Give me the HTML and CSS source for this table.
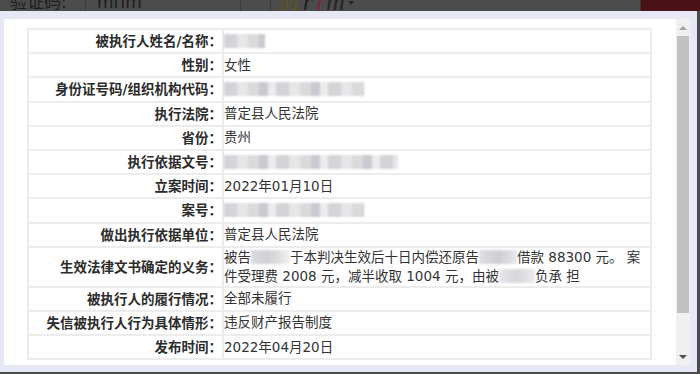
FILE: index.html
```html
<!DOCTYPE html>
<html lang="zh-CN">
<head>
<meta charset="utf-8">
<title>失信被执行人详情</title>
<link rel="stylesheet" href="styles.css">
</head>
<body>
<div class="page-strip">
  <div class="cell c-label"><span class="strip-text">验证码:</span></div>
  <div class="cell c-input"><span class="strip-text">mrim</span></div>
  <div class="cell c-gap"></div>
  <div class="cell c-captcha"><span class="cap"><span class="cap-m">M</span><span class="cap-r">r</span><span class="cap-i">i</span><span class="cap-mm">m</span></span><span class="caret"></span></div>
  <div class="cell c-side"></div>
</div>
<div class="modal">
  <div class="panel">
    <div class="content">
      <table class="info">
        <tr><th>被执行人姓名/名称<span class="colon">：</span></th><td><span class="redact w-name"></span></td></tr>
        <tr><th>性别<span class="colon">：</span></th><td>女性</td></tr>
        <tr><th>身份证号码/组织机构代码<span class="colon">：</span></th><td><span class="redact w-id"></span></td></tr>
        <tr><th>执行法院<span class="colon">：</span></th><td>普定县人民法院</td></tr>
        <tr><th>省份<span class="colon">：</span></th><td>贵州</td></tr>
        <tr><th>执行依据文号<span class="colon">：</span></th><td><span class="redact w-doc"></span></td></tr>
        <tr><th>立案时间<span class="colon">：</span></th><td>2022年01月10日</td></tr>
        <tr><th>案号<span class="colon">：</span></th><td><span class="redact w-case"></span></td></tr>
        <tr><th>做出执行依据单位<span class="colon">：</span></th><td>普定县人民法院</td></tr>
        <tr class="tall"><th>生效法律文书确定的义务<span class="colon">：</span></th><td>被告<span class="redact w-a"></span>于本判决生效后十日内偿还原告<span class="redact w-b"></span>借款 88300 元。 案件受理费 2008 元，减半收取 1004 元，由被<span class="redact w-c"></span>负承 担</td></tr>
        <tr><th>被执行人的履行情况<span class="colon">：</span></th><td>全部未履行</td></tr>
        <tr><th>失信被执行人行为具体情形<span class="colon">：</span></th><td>违反财产报告制度</td></tr>
        <tr><th>发布时间<span class="colon">：</span></th><td>2022年04月20日</td></tr>
      </table>
    </div>
    <div class="scrollbar">
      <div class="arrow arrow-up"></div>
      <div class="thumb"></div>
      <div class="track"></div>
      <div class="arrow arrow-down"></div>
    </div>
  </div>
</div>
</body>
</html>
```

FILE: styles.css
```css
html, body {
  margin: 0;
  padding: 0;
}
body {
  width: 700px;
  height: 374px;
  overflow: hidden;
  background: #4b4b4b;
  font-family: "DejaVu Sans", "Noto Sans CJK SC", sans-serif;
}

/* page behind the overlay */
.page-strip {
  display: flex;
  height: 11px;
  overflow: hidden;
}
.cell {
  height: 11px;
  box-sizing: border-box;
  border-right: 1px solid #3b3b3b;
  overflow: hidden;
}
.strip-text {
  display: block;
  margin-top: -8px;
  line-height: 20px;
  font-size: 17px;
  color: #1d1d1d;
  font-family: "DejaVu Sans", "Noto Sans CJK SC", sans-serif;
}
.c-label {
  width: 86px;
  padding-left: 10px;
}
.c-input {
  width: 155px;
  padding-left: 11px;
}
.c-gap {
  width: 30px;
}
.c-captcha {
  width: 370px;
  padding-left: 7px;
  display: flex;
  align-items: flex-start;
  justify-content: space-between;
}
.cap {
  display: block;
  margin-top: -10px;
  line-height: 24px;
  font-size: 26px;
  font-style: italic;
  font-family: "Liberation Serif", serif;
  letter-spacing: 3px;
}
.cap-m { color: #5c5424; }
.cap-r { color: #202020; }
.cap-i { color: #7a2548; }
.cap-mm { color: #252525; }
.caret {
  width: 0;
  height: 0;
  margin-top: 1px;
  margin-right: 287px;
  border-left: 3px solid transparent;
  border-right: 3px solid transparent;
  border-top: 4px solid #262626;
}
.c-side {
  flex: 1;
  border-right: 0;
  background: #4a1214;
}

/* modal */
.modal {
  width: 697px;
  height: 361px;
  box-sizing: border-box;
  padding: 8px 7px 7px 4px;
  background: #e6e8f5;
}
.panel {
  display: flex;
  height: 346px;
  background: #fff;
}
.content {
  flex: 1;
  padding: 9px 0 0 23px;
  overflow: hidden;
}

.info {
  width: 625px;
  border-collapse: collapse;
  font-size: 13.5px;
  color: #333;
}
.info th,
.info td {
  border: 2px solid #ececec;
  padding: 0;
  line-height: 19px;
  height: 22.2px;
  vertical-align: middle;
}
.info th {
  width: 193px;
  text-align: right;
  font-weight: bold;
  color: #2b2b2b;
  white-space: nowrap;
}
.info .colon {
  font-family: "Noto Sans CJK TC", sans-serif;
}
.info td {
  padding-left: 0;
  text-align: left;
}
.info .tall td,
.info .tall th {
  height: 38px;
}

.redact {
  display: inline-block;
  height: 14px;
  vertical-align: -2px;
  filter: blur(1.2px);
  background: repeating-linear-gradient(90deg, #d3d3d8 0 13px, #e6e6e8 13px 24px, #dadada 24px 35px, #c9c9cf 35px 44px, #ececec 44px 52px);
}
.w-name { width: 41px; }
.w-id { width: 140px; }
.w-doc { width: 174px; }
.w-case { width: 140px; }
.w-a { width: 39px; background: linear-gradient(90deg, #dcdce0, #cfcfd4 40%, #e4e4e6 80%, #f2f2f2); }
.w-b { width: 38px; background: linear-gradient(90deg, #e0e0e4, #cdcdd3 50%, #e8e8ea); }
.w-c { width: 36px; background: linear-gradient(90deg, #e6e6ea, #d6d6db 50%, #ececee); }

/* scrollbar */
.scrollbar {
  width: 14px;
  background: #f0f0f0;
  display: flex;
  flex-direction: column;
  align-items: center;
}
.arrow {
  height: 17px;
  width: 14px;
  display: flex;
  align-items: center;
  justify-content: center;
}
.arrow-up::before {
  content: "";
  border-left: 4px solid transparent;
  border-right: 4px solid transparent;
  border-bottom: 4px solid #a3a3a3;
}
.arrow-down::before {
  content: "";
  border-left: 4px solid transparent;
  border-right: 4px solid transparent;
  border-top: 4px solid #505050;
}
.thumb {
  width: 12px;
  height: 277px;
  background: #c1c1c1;
}
.track {
  flex: 1;
}
```
